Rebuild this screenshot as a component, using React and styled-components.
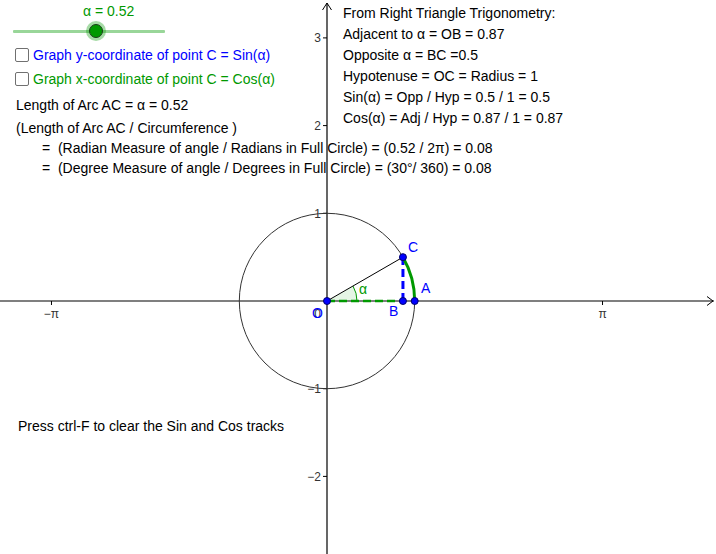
import React from "react";
import styled, { createGlobalStyle } from "styled-components";

const Global = createGlobalStyle`
  html, body { margin: 0; padding: 0; background: #fff; }
  body { font-family: "Liberation Sans", Arial, sans-serif; }
`;

const GREEN = "#009900";
const BLUE = "#0000ff";

const Canvas = styled.div`
  position: relative;
  width: 716px;
  height: 554px;
  overflow: hidden;
  background: #fff;
  font-family: "Liberation Sans", Arial, sans-serif;
  font-size: 14px;
  color: #000;
`;

const GraphSvg = styled.svg`
  position: absolute;
  inset: 0;
  display: block;
`;

const ControlPanel = styled.div`
  position: absolute;
  left: 0;
  top: 1px;
  display: flex;
  flex-direction: column;
`;

const SliderLabel = styled.div`
  margin-left: 83px;
  line-height: 20px;
  height: 20px;
  color: ${GREEN};
`;

const Slider = styled.div`
  position: relative;
  height: 20px;
  margin-left: 13px;
  width: 152px;
  display: flex;
  align-items: center;
`;

const Track = styled.div`
  width: 100%;
  height: 3px;
  background: #99d699;
  border-radius: 1px;
`;

const Knob = styled.div`
  position: absolute;
  top: 50%;
  width: 12px;
  height: 12px;
  margin-left: -7px;
  margin-top: -7px;
  border-radius: 50%;
  background: ${GREEN};
  border: 1px solid #1a3d1a;
  box-shadow: 0 0 0 3px rgba(0, 153, 0, 0.35);
`;

const CheckRow = styled.label`
  display: flex;
  align-items: center;
  gap: 4px;
  height: 24px;
  margin-top: ${(p) => p.$mt || 0}px;
  padding-left: 15px;
  color: ${(p) => p.$color};
  white-space: nowrap;
`;

const Box = styled.span`
  width: 12px;
  height: 12px;
  border: 1px solid #707070;
  border-radius: 2px;
  background: #fff;
  flex: none;
`;

const TextLine = styled.div`
  line-height: 20px;
  height: 20px;
  margin-top: ${(p) => p.$mt || 0}px;
  padding-left: ${(p) => p.$indent || 16}px;
  white-space: pre;
`;

const InfoPanel = styled.div`
  position: absolute;
  left: 343px;
  top: 3px;
  display: flex;
  flex-direction: column;
`;

const InfoLine = styled.div`
  line-height: 21px;
  height: 21px;
  white-space: nowrap;
`;

const Hint = styled.div`
  position: absolute;
  left: 18px;
  top: 416px;
  line-height: 20px;
  white-space: nowrap;
`;

const O = { x: 327, y: 301 };
const U = 87.7;

function Graph() {
  const cx = O.x + U * Math.cos(Math.PI / 6);
  const cy = O.y - U * Math.sin(Math.PI / 6);
  const ax = O.x + U;
  const r = 30;
  const sx = O.x + r * Math.cos(Math.PI / 6);
  const sy = O.y - r * Math.sin(Math.PI / 6);
  const yTicks = [3, 2, 1, -1, -2];
  const labelStyle = { fontFamily: "Liberation Sans, Arial, sans-serif" };
  return (
    <GraphSvg width="716" height="554" viewBox="0 0 716 554">
      <line x1="0" y1={O.y} x2="714" y2={O.y} stroke="#000" strokeWidth="1.2" />
      <polyline points="707,296.5 713,301 707,305.5" fill="none" stroke="#000" strokeWidth="1" />
      <line x1={O.x} y1="3" x2={O.x} y2="554" stroke="#000" strokeWidth="1.2" />
      <polyline points="322.5,10 327,3 331.5,10" fill="none" stroke="#000" strokeWidth="1" />
      {yTicks.map((t) => (
        <g key={t}>
          <line x1={O.x - 4} y1={O.y - t * U} x2={O.x} y2={O.y - t * U} stroke="#000" strokeWidth="1" />
          <text
            x={O.x - 6}
            y={O.y - t * U + 4.5}
            fontSize="12"
            fill="#333"
            textAnchor="end"
            style={labelStyle}
          >
            {t < 0 ? `\u2212${-t}` : t}
          </text>
        </g>
      ))}
      {[-1, 1].map((s) => (
        <g key={s}>
          <line x1={O.x + s * Math.PI * U} y1={O.y} x2={O.x + s * Math.PI * U} y2={O.y + 4} stroke="#000" strokeWidth="1" />
          <text x={O.x + s * Math.PI * U} y={O.y + 17} fontSize="12" fill="#333" textAnchor="middle" style={labelStyle}>
            {s < 0 ? "\u2212\u03c0" : "\u03c0"}
          </text>
        </g>
      ))}
      <text x={O.x - 6} y={O.y + 17} fontSize="12" fill="#333" textAnchor="end" style={labelStyle}>0</text>

      <circle cx={O.x} cy={O.y} r={U} fill="none" stroke="#333" strokeWidth="1" />

      <path
        d={`M ${O.x} ${O.y} L ${O.x + r} ${O.y} A ${r} ${r} 0 0 0 ${sx} ${sy} Z`}
        fill="rgba(0,153,0,0.1)"
        stroke="none"
      />
      <path d={`M ${O.x + r} ${O.y} A ${r} ${r} 0 0 0 ${sx} ${sy}`} fill="none" stroke={GREEN} strokeWidth="1" />

      <line x1={O.x} y1={O.y} x2={cx} y2={cy} stroke="#000" strokeWidth="1" />
      <line x1={O.x} y1={O.y} x2={cx} y2={O.y} stroke={GREEN} strokeWidth="2.5" strokeDasharray="8 4" />
      <line x1={cx} y1={O.y} x2={cx} y2={cy} stroke={BLUE} strokeWidth="3" strokeDasharray="8 4" />
      <path d={`M ${ax} ${O.y} A ${U} ${U} 0 0 0 ${cx} ${cy}`} fill="none" stroke={GREEN} strokeWidth="3" />

      {[
        [O.x, O.y],
        [cx, O.y],
        [ax, O.y],
        [cx, cy],
      ].map(([x, y], i) => (
        <circle key={i} cx={x} cy={y} r="3.5" fill={BLUE} stroke="#00006e" strokeWidth="1" />
      ))}

      <text x="408" y="252" fontSize="14" fill={BLUE} style={labelStyle}>C</text>
      <text x="421" y="293" fontSize="14" fill={BLUE} style={labelStyle}>A</text>
      <text x="389" y="316" fontSize="14" fill={BLUE} style={labelStyle}>B</text>
      <text x="312" y="318" fontSize="14" fill={BLUE} style={labelStyle}>O</text>
      <text x="359" y="294" fontSize="14" fill={GREEN} style={labelStyle}>α</text>
    </GraphSvg>
  );
}

export default function App() {
  return (
    <>
      <Global />
      <Canvas>
        <Graph />
        <ControlPanel>
          <SliderLabel>α = 0.52</SliderLabel>
          <Slider>
            <Track />
            <Knob style={{ left: `${((96 - 13) / 152) * 100}%` }} />
          </Slider>
          <CheckRow $color={BLUE} $mt={2}>
            <Box />
            Graph y-coordinate of point C = Sin(α)
          </CheckRow>
          <CheckRow $color={GREEN}>
            <Box />
            Graph x-coordinate of point C = Cos(α)
          </CheckRow>
          <TextLine $mt={4}>Length of Arc AC = α = 0.52</TextLine>
          <TextLine $mt={3}>(Length of Arc AC / Circumference )</TextLine>
          <TextLine $indent={42}>=  (Radian Measure of angle / Radians in Full Circle) = (0.52 / 2π) = 0.08</TextLine>
          <TextLine $indent={42}>=  (Degree Measure of angle / Degrees in Full Circle) = (30°/ 360) = 0.08</TextLine>
        </ControlPanel>
        <InfoPanel>
          <InfoLine>From Right Triangle Trigonometry:</InfoLine>
          <InfoLine>Adjacent to α = OB = 0.87</InfoLine>
          <InfoLine>Opposite α = BC =0.5</InfoLine>
          <InfoLine>Hypotenuse = OC = Radius = 1</InfoLine>
          <InfoLine>Sin(α) = Opp / Hyp = 0.5 / 1 = 0.5</InfoLine>
          <InfoLine>Cos(α) = Adj / Hyp = 0.87 / 1 = 0.87</InfoLine>
        </InfoPanel>
        <Hint>Press ctrl-F to clear the Sin and Cos tracks</Hint>
      </Canvas>
    </>
  );
}
